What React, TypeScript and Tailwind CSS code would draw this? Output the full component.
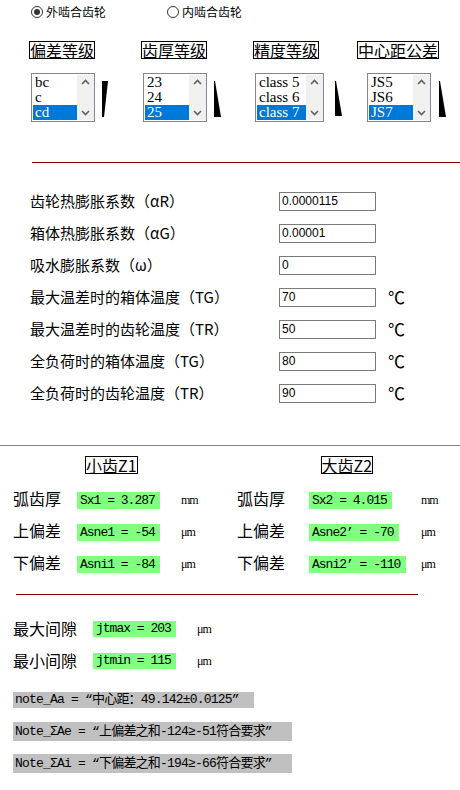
import React from "react";

const tri = [
  "1,0 7,0 3,36 1,36",
  "0,0 1,0 7,36 0,36",
  "0,0 1,0 7,35 0,35",
  "0,0 1,0 7,36 0,36",
];

function Radio({ checked, label }: { checked?: boolean; label: string }) {
  return (
    <div className="flex items-center gap-[3px]">
      <div className="w-[12px] h-[12px] rounded-full border border-[#333] bg-white flex items-center justify-center">
        {checked && <div className="w-[6px] h-[6px] rounded-full bg-[#333]" />}
      </div>
      <span className="text-[12px] leading-[14px] text-black">{label}</span>
    </div>
  );
}

function ListBox({ items, width }: { items: string[]; width: string }) {
  return (
    <div className={`flex h-[49px] border border-[#828790] bg-white pl-px py-px ${width}`}>
      <div className="flex-1 flex flex-col">
        {items.map((it, i) => (
          <div
            key={it}
            className={`h-[15px] leading-[15px] pl-[2px] text-[15px] font-['Liberation_Serif',serif] ${
              i === 2 ? "bg-[#0078d7] text-white" : "text-black"
            }`}
          >
            {it}
          </div>
        ))}
      </div>
      <div className="w-[17px] bg-[#f0f0f0] flex flex-col justify-between items-center py-[4px]">
        <svg width="9" height="6" viewBox="0 0 9 6">
          <polyline points="1,5 4.5,1.5 8,5" fill="none" stroke="#606060" strokeWidth="1.6" />
        </svg>
        <svg width="9" height="6" viewBox="0 0 9 6">
          <polyline points="1,1 4.5,4.5 8,1" fill="none" stroke="#606060" strokeWidth="1.6" />
        </svg>
      </div>
    </div>
  );
}

function Wedge({ points, ml }: { points: string; ml: string }) {
  return (
    <svg width="8" height="36" viewBox="0 0 8 36" className={`mt-[8px] ${ml}`}>
      <polygon points={points} fill="#000" />
    </svg>
  );
}

function Unit({ text }: { text: string }) {
  return (
    <span className="block text-[12px] leading-[12px] tracking-[-1px] font-['Liberation_Serif',serif] text-black">
      {text}
    </span>
  );
}

const thermal = [
  { label: "齿轮热膨胀系数（αR）", value: "0.0000115" },
  { label: "箱体热膨胀系数（αG）", value: "0.00001" },
  { label: "吸水膨胀系数（ω）", value: "0" },
  { label: "最大温差时的箱体温度（TG）", value: "70", unit: true },
  { label: "最大温差时的齿轮温度（TR）", value: "50", unit: true },
  { label: "全负荷时的箱体温度（TG）", value: "80", unit: true },
  { label: "全负荷时的齿轮温度（TR）", value: "90", unit: true },
];

const gears = [
  { label: "弧齿厚", l: "Sx1 = 3.287", r: "Sx2 = 4.015", rw: "w-[83px]", unit: "mm" },
  { label: "上偏差", l: "Asne1 = -54", r: "Asne2’ = -70", rw: "w-[90px]", unit: "μm" },
  { label: "下偏差", l: "Asni1 = -84", r: "Asni2’ = -110", rw: "w-[97px]", unit: "μm" },
];

export default function App() {
  return (
    <div className="w-[460px] h-[790px] bg-white overflow-hidden font-['Noto_Sans_CJK_SC',sans-serif] text-black">
      {/* Radio */}
      <div className="flex pt-[5px] pl-[31px]">
        <div className="w-[136px]">
          <Radio checked label="外啮合齿轮" />
        </div>
        <Radio label="内啮合齿轮" />
      </div>

      {/* Grades */}
      <div className="flex pl-[29px] mt-[22px]">
        <div className="w-[112px] flex flex-col items-start">
          <div className="border border-black text-[16px] leading-[16px]">偏差等级</div>
          <div className="flex mt-[14px] ml-[2px]">
            <ListBox items={["bc", "c", "cd"]} width="w-[64px]" />
            <Wedge points={tri[0]} ml="ml-[6px]" />
          </div>
        </div>
        <div className="w-[112px] flex flex-col items-start">
          <div className="border border-black text-[16px] leading-[16px]">齿厚等级</div>
          <div className="flex mt-[14px] ml-[2px]">
            <ListBox items={["23", "24", "25"]} width="w-[64px]" />
            <Wedge points={tri[1]} ml="ml-[7px]" />
          </div>
        </div>
        <div className="w-[104px] flex flex-col items-start">
          <div className="border border-black text-[16px] leading-[16px]">精度等级</div>
          <div className="flex mt-[14px] ml-[2px]">
            <ListBox items={["class 5", "class 6", "class 7"]} width="w-[69px]" />
            <Wedge points={tri[2]} ml="ml-[11px]" />
          </div>
        </div>
        <div className="flex flex-col items-start">
          <div className="border border-black text-[16px] leading-[16px]">中心距公差</div>
          <div className="flex mt-[14px] ml-[10px]">
            <ListBox items={["JS5", "JS6", "JS7"]} width="w-[64px]" />
            <Wedge points={tri[3]} ml="ml-[8px]" />
          </div>
        </div>
      </div>

      <div className="ml-[32px] mt-[40px] h-px bg-[#800000]" />

      {/* Thermal */}
      <div className="mt-[22px] flex flex-col">
        {thermal.map((t) => (
          <div key={t.label} className="flex items-center h-[32px] pl-[30px]">
            <div className="w-[249px] text-[15px] leading-[16px]">{t.label}</div>
            <div className="w-[97px] h-[19px] border border-[#7a7a7a] pl-[2px] text-[12px] leading-[17px] font-['Liberation_Sans',sans-serif]">
              {t.value}
            </div>
            {t.unit && <span className="ml-[12px] text-[17px] leading-[18px]">℃</span>}
          </div>
        ))}
      </div>

      <div className="mt-[36px] h-px bg-[#808080]" />

      {/* Gears */}
      <div className="flex mt-[10px]">
        <div className="ml-[85px] border border-black text-[16px] leading-[16px]">小齿Z1</div>
        <div className="ml-[183px] border border-black text-[16px] leading-[16px]">大齿Z2</div>
      </div>
      <div className="mt-[10px] flex flex-col">
        {gears.map((g) => (
          <div key={g.label} className="flex items-center h-[32px]">
            <div className="w-[64px] ml-[13px] mb-[5px] text-[16px] leading-[16px]">{g.label}</div>
            <div className="w-[83px] h-[17px] bg-[#80ff80] pl-[3px] text-[13px] leading-[17px] tracking-[-1px] font-['Liberation_Mono','Noto_Sans_CJK_SC',monospace]">
              {g.l}
            </div>
            <div className="w-[77px] pl-[21px]">
              <Unit text={g.unit} />
            </div>
            <div className="w-[72px] mb-[5px] text-[16px] leading-[16px]">{g.label}</div>
            <div className={`${g.rw} h-[17px] bg-[#80ff80] pl-[3px] text-[13px] leading-[17px] tracking-[-1px] font-['Liberation_Mono','Noto_Sans_CJK_SC',monospace]`}>
              {g.r}
            </div>
            <div className="flex-1" />
            <div className="w-[39px]">
              <Unit text={g.unit} />
            </div>
          </div>
        ))}
      </div>

      <div className="ml-[16px] w-[402px] mt-[14px] h-px bg-[#800000]" />

      {/* Backlash */}
      <div className="mt-[18px] flex flex-col">
        {[
          { label: "最大间隙", v: "jtmax = 203" },
          { label: "最小间隙", v: "jtmin = 115" },
        ].map((r) => (
          <div key={r.label} className="flex items-center h-[32px]">
            <div className="w-[80px] ml-[13px] mb-[3px] text-[16px] leading-[16px]">{r.label}</div>
            <div className="w-[83px] h-[16px] bg-[#80ff80] pl-[3px] text-[13px] leading-[16px] tracking-[-1px] font-['Liberation_Mono','Noto_Sans_CJK_SC',monospace]">
              {r.v}
            </div>
            <div className="ml-[21px]">
              <Unit text="μm" />
            </div>
          </div>
        ))}
      </div>

      {/* Notes */}
      <div className="flex flex-col items-start pl-[13px] font-['Liberation_Mono','Noto_Sans_CJK_SC',monospace] text-[13px] tracking-[-0.8px]">
        <div className="mt-[15px] w-[241px] h-[16px] leading-[16px] bg-[#c0c0c0] pl-[2px] whitespace-nowrap">
          note_Aa = “中心距：49.142±0.0125”
        </div>
        <div className="mt-[14px] w-[279px] h-[19px] leading-[19px] bg-[#c0c0c0] pl-[2px] whitespace-nowrap">
          Note_ΣAe = “上偏差之和-124≥-51符合要求”
        </div>
        <div className="mt-[13px] w-[279px] h-[19px] leading-[19px] bg-[#c0c0c0] pl-[2px] whitespace-nowrap">
          Note_ΣAi = “下偏差之和-194≥-66符合要求”
        </div>
      </div>
    </div>
  );
}
